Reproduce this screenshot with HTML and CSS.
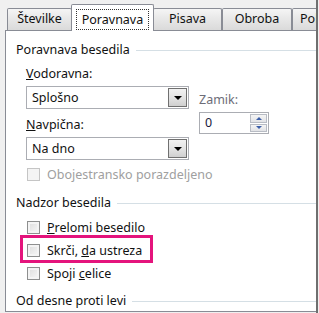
FILE: index.html
```html
<!DOCTYPE html>
<html lang="sl">
<head>
    <meta charset="UTF-8">
    <meta name="viewport" content="width=device-width, initial-scale=1.0">
    <title>Oblikovanje celic</title>
    <link rel="stylesheet" href="styles.css">
</head>
<body>
    <div class="dialog">
        <div class="tabs">
            <div class="tab tab-num">Številke</div>
            <div class="tab tab-active"><span class="focus">Poravnava</span></div>
            <div class="tab tab-font">Pisava</div>
            <div class="tab tab-border">Obroba</div>
            <div class="tab tab-fill">Polnilo</div>
        </div>
        <div class="panel">
            <div class="group-title title-first">Poravnava besedila</div>

            <div class="align-row">
                <div class="align-main">
                    <div class="label"><u>V</u>odoravna:</div>
                    <div class="select">
                        <span class="select-text">Splošno</span>
                        <span class="select-btn"><i class="arrow"></i></span>
                    </div>
                    <div class="label label-second"><u>N</u>avpična:</div>
                    <div class="select">
                        <span class="select-text">Na dno</span>
                        <span class="select-btn"><i class="arrow"></i></span>
                    </div>
                </div>
                <div class="indent">
                    <div class="label label-dim">Zamik:</div>
                    <div class="spin">
                        <span class="spin-val">0</span>
                        <span class="spin-btns">
                            <span class="spin-btn"><i class="arrow-up"></i></span>
                            <span class="spin-btn"><i class="arrow-down"></i></span>
                        </span>
                    </div>
                </div>
            </div>

            <div class="check check-disabled"><span class="box"></span><span>Obojestransko porazdeljeno</span></div>

            <div class="group-title title-mid">Nadzor besedila</div>
            <div class="check check-first"><span class="box"></span><span><u>P</u>relomi besedilo</span></div>
            <div class="check highlight"><span class="box"></span><span>Skrči, <u>d</u>a ustreza</span></div>
            <div class="check"><span class="box"></span><span>Spoji <u>c</u>elice</span></div>

            <div class="group-title title-last">Od desne proti levi</div>
        </div>
    </div>
</body>
</html>
```

FILE: styles.css
```css
body {
    margin: 0;
    padding: 0;
    background-color: #f0f0f0;
    font-family: "Noto Sans", "Open Sans", sans-serif;
    font-size: 12.5px;
    color: #111;
    width: 319px;
    height: 313px;
    overflow: hidden;
}

.dialog {
    width: 316px;
    height: 313px;
    border-right: 2px solid #6f6f6f;
    display: flex;
    flex-direction: column;
    overflow: hidden;
}

/* tab strip */

.tabs {
    height: 30px;
    display: flex;
    align-items: flex-end;
    padding-left: 7px;
    flex-shrink: 0;
}

.tab {
    box-sizing: border-box;
    height: 22px;
    line-height: 20px;
    text-align: center;
    border: 1px solid #898c95;
    border-bottom: none;
    border-radius: 2px 2px 0 0;
    background: linear-gradient(#f5f5f5, #e8e8e8 45%, #dadada);
    flex-shrink: 0;
    white-space: nowrap;
    overflow: hidden;
}

.tab-num { width: 65px; }
.tab-font { width: 69px; }
.tab-border { width: 70px; }
.tab-fill { width: 70px; text-align: left; padding-left: 7px; }

.tab-active {
    position: relative;
    z-index: 1;
    width: 83px;
    height: 27px;
    margin: 0 -1px -1px -1px;
    background: #fff;
    padding-top: 4px;
}

.focus {
    display: inline-block;
    border: 1px dotted #333;
    padding: 0 5px;
    line-height: 19px;
}

/* page body */

.panel {
    flex: 1;
    margin-left: 5px;
    margin-bottom: 1px;
    background: #fff;
    border-left: 1px solid #898c95;
    border-top: 1px solid #898c95;
    border-bottom: 1px solid #898c95;
    padding-left: 10px;
}

.group-title {
    display: flex;
    align-items: center;
    height: 16px;
    line-height: 16px;
}

.group-title::after {
    content: "";
    flex: 1;
    height: 1px;
    background: #d5dfe5;
    margin-left: 6px;
}

.title-first { margin-top: 11px; }
.title-mid { margin-top: 10px; }
.title-last { margin-top: 8px; }

.align-row {
    display: flex;
    margin-top: 8px;
    padding-left: 10px;
}

.align-main {
    width: 163px;
}

.label {
    height: 16px;
    line-height: 16px;
}

.label-second { margin-top: 8px; }

.label-dim { color: #6d6d78; }

.select {
    box-sizing: border-box;
    height: 23px;
    margin-top: 4px;
    border: 1px solid #abadb3;
    display: flex;
    align-items: center;
    justify-content: space-between;
    padding-left: 5px;
    padding-right: 1px;
}

.select-btn {
    box-sizing: border-box;
    width: 19px;
    height: 19px;
    border: 1px solid #707070;
    background: linear-gradient(#f2f2f2, #e4e4e4 50%, #cfcfcf);
    display: flex;
    align-items: center;
    justify-content: center;
}

.arrow {
    width: 0;
    height: 0;
    border-left: 4px solid transparent;
    border-right: 4px solid transparent;
    border-top: 4px solid #000;
}

.indent {
    margin-left: 10px;
    padding-top: 26px;
}

.spin {
    box-sizing: border-box;
    width: 70px;
    height: 22px;
    margin-top: 4px;
    border: 1px solid #abadb3;
    display: flex;
    justify-content: space-between;
    padding: 1px;
}

.spin-val {
    padding-left: 4px;
    line-height: 18px;
    color: #1a1a40;
}

.spin-btns {
    display: flex;
    flex-direction: column;
    width: 17px;
    gap: 1px;
}

.spin-btn {
    flex: 1;
    box-sizing: border-box;
    border: 1px solid #b8bcc4;
    background: linear-gradient(#f4f4f4, #e2e3e6);
    display: flex;
    align-items: center;
    justify-content: center;
}

.arrow-up {
    border-left: 3px solid transparent;
    border-right: 3px solid transparent;
    border-bottom: 3px solid #3c5fa8;
}

.arrow-down {
    border-left: 3px solid transparent;
    border-right: 3px solid transparent;
    border-top: 3px solid #3c5fa8;
}

/* checkboxes */

.check {
    position: relative;
    display: flex;
    align-items: center;
    height: 23px;
    margin-left: 11px;
    white-space: nowrap;
}

.check-disabled {
    height: 22px;
    margin-top: 3px;
    color: #a0a0a0;
}

.check-first { margin-top: 5px; }

.box {
    box-sizing: border-box;
    width: 13px;
    height: 13px;
    margin-right: 7px;
    flex-shrink: 0;
    border: 1px solid #8e8f8f;
    background: linear-gradient(135deg, #dcdcdc, #f8f8f8);
    box-shadow: inset 0 0 0 2px #f4f4f4;
}

.check-disabled .box {
    border-color: #c5c5c5;
    background: #f4f4f4;
}

.highlight::after {
    content: "";
    position: absolute;
    left: -7px;
    top: -4px;
    width: 133px;
    height: 28px;
    box-sizing: border-box;
    border: 3px solid #e4147c;
}
```
